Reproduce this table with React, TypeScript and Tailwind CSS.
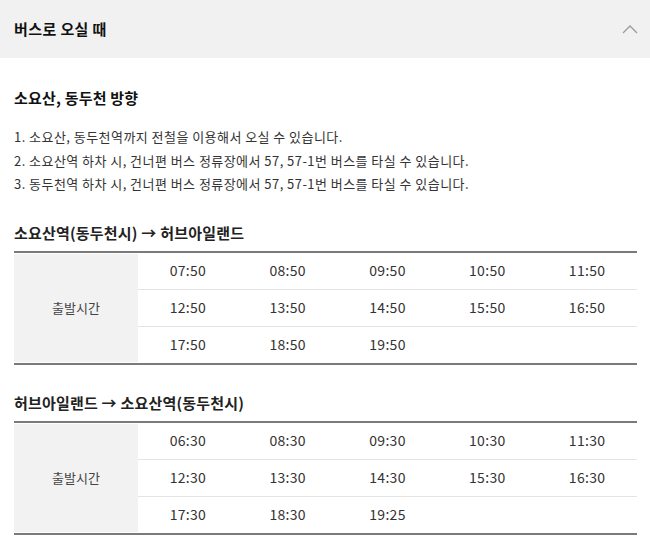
import React from "react";

const font = { fontFamily: '"Noto Sans CJK KR", "Noto Sans", sans-serif' };

interface Timetable {
  title: string;
  rows: string[][];
}

const tables: Timetable[] = [
  {
    title: "소요산역(동두천시) → 허브아일랜드",
    rows: [
      ["07:50", "08:50", "09:50", "10:50", "11:50"],
      ["12:50", "13:50", "14:50", "15:50", "16:50"],
      ["17:50", "18:50", "19:50", "", ""],
    ],
  },
  {
    title: "허브아일랜드 → 소요산역(동두천시)",
    rows: [
      ["06:30", "08:30", "09:30", "10:30", "11:30"],
      ["12:30", "13:30", "14:30", "15:30", "16:30"],
      ["17:30", "18:30", "19:25", "", ""],
    ],
  },
];

const notes = [
  "1. 소요산, 동두천역까지 전철을 이용해서 오실 수 있습니다.",
  "2. 소요산역 하차 시, 건너편 버스 정류장에서 57, 57-1번 버스를 타실 수 있습니다.",
  "3. 동두천역 하차 시, 건너편 버스 정류장에서 57, 57-1번 버스를 타실 수 있습니다.",
];

function TimeTable({ table, className }: { table: Timetable; className?: string }) {
  return (
    <div className={className}>
      <h4 className="text-[15px] leading-[20px] font-bold tracking-[0.2px] text-[#222]">{table.title}</h4>
      <div className="mt-[8px] flex border-y-2 border-[#7a7a7a]">
        <div className="w-[124px] my-px bg-[#f2f2f2] flex items-center justify-center text-[13px] text-[#444]">
          출발시간
        </div>
        <div className="flex-1">
          {table.rows.map((row, i) => (
            <div
              key={i}
              className={
                i < table.rows.length - 1
                  ? "h-[37px] grid grid-cols-5 items-center border-b border-[#e4e4e4]"
                  : "h-[36px] grid grid-cols-5 items-center"
              }
            >
              {row.map((t, j) => (
                <span key={j} className="text-center text-[14px] tracking-[0.3px] text-[#333]">
                  {t}
                </span>
              ))}
            </div>
          ))}
        </div>
      </div>
    </div>
  );
}

export default function App() {
  return (
    <div className="w-[650px] h-[541px] bg-white overflow-hidden" style={font}>
      <div className="h-[58px] bg-[#f1f1f1] flex items-center justify-between pl-[14px] pr-[12px]">
        <span className="text-[15px] font-bold tracking-[0.4px] text-[#111]">버스로 오실 때</span>
        <svg width="16" height="10" viewBox="0 0 16 10" fill="none">
          <polyline points="1,9 8,2 15,9" stroke="#9a9a9a" strokeWidth="1.3" />
        </svg>
      </div>
      <div className="px-[14px] pr-[13px]">
        <h3 className="mt-[30px] text-[15px] leading-[20px] font-bold tracking-[0.2px] text-[#111]">
          소요산, 동두천 방향
        </h3>
        <ul className="mt-[17px]">
          {notes.map((n) => (
            <li key={n} className="text-[13px] leading-[23.5px] tracking-[0.45px] text-[#333]">
              {n}
            </li>
          ))}
        </ul>
        <TimeTable table={tables[0]} className="mt-[27px]" />
        <TimeTable table={tables[1]} className="mt-[28px]" />
      </div>
    </div>
  );
}
